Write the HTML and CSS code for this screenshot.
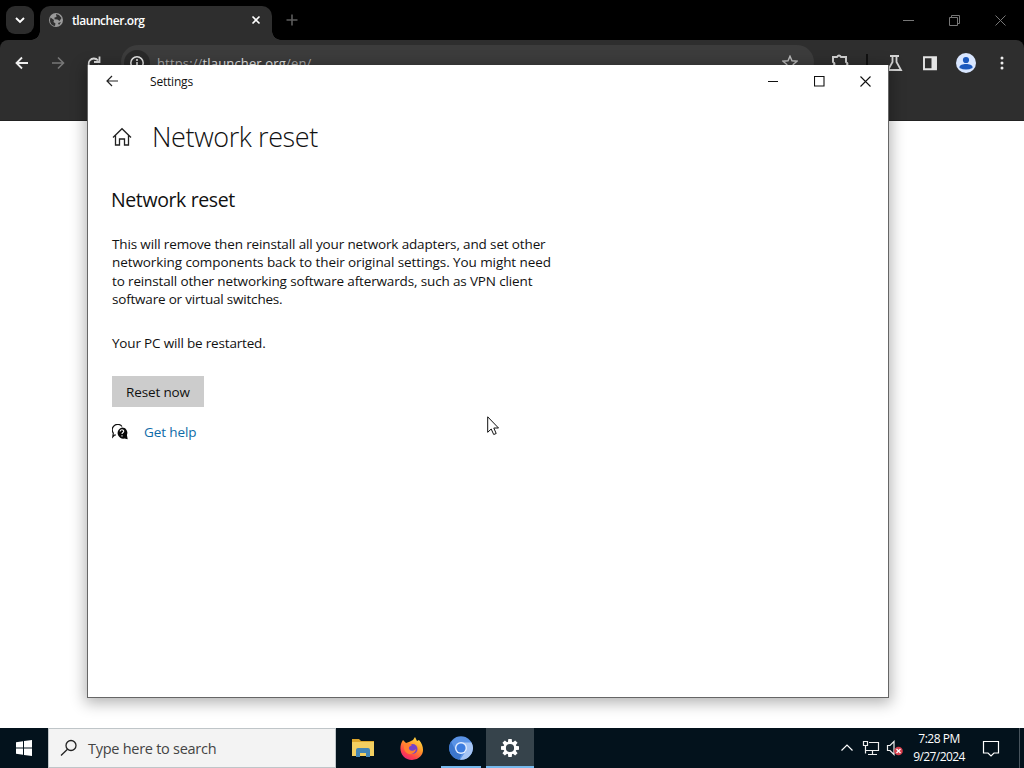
FILE: index.html
```html
<!DOCTYPE html>
<html lang="en">
<head>
<meta charset="utf-8">
<title>Settings</title>
<link rel="stylesheet" href="styles.css">
</head>
<body>
<div class="desktop">
  <div class="browser">
    <div class="tabstrip">
      <div class="tab-search"><svg width="28" height="28"><path d="M10 12l4 4 4-4" fill="none" stroke="#fff" stroke-width="1.9"/></svg></div>
      <div class="tab">
        <svg class="globe" width="16" height="16" viewBox="0 0 16 16"><circle cx="8" cy="8" r="7" fill="#9a9a9a"/><path d="M2.5 5.500L6 8l-.5 2 2 1.500-.5 2.500C3.500 13.500 2 11 2 8zM8 2l3 1 2.500 3-2 3-2-1.500-3-.3V5.500l2-.5zM10 11l3-1-2 3z" fill="#303030"/></svg>
        <span class="tab-title">tlauncher.org</span>
        <svg width="10" height="10"><path d="M1.500 1.500l7 7M8.500 1.500l-7 7" stroke="#fff" stroke-width="1.600"/></svg>
      </div>
      <svg class="new-tab" width="12" height="12"><path d="M6 .5v11M.5 6h11" stroke="#5c5c5c" stroke-width="1.6"/></svg>
      <div class="browser-controls">
        <svg width="11" height="11"><path d="M0 5.500h11" stroke="#777"/></svg>
        <svg width="11" height="11"><path d="M.5 2.500h8v8h-8zM2.500 2.500v-2h8v8h-2" fill="none" stroke="#777"/></svg>
        <svg width="11" height="11"><path d="M.5.5l10 10M10.500.5l-10 10" stroke="#777"/></svg>
      </div>
    </div>
    <div class="toolbar">
      <svg class="nav" width="108" height="24"><path d="M28 12H17.500M22 6.500L16.500 12l5.500 5.500" fill="none" stroke="#eee" stroke-width="1.8"/><path d="M52 12h11M58 6.500l5.500 5.500-5.500 5.500" fill="none" stroke="#777" stroke-width="1.6"/><path d="M98 9.500A5.300 5.300 0 1 0 99 14M99.500 5.500V11H94" fill="none" stroke="#ddd" stroke-width="1.8"/></svg>
      <div class="address">
        <div class="info"><svg width="16" height="16"><circle cx="8" cy="8" r="6.200" fill="none" stroke="#e2e2e2" stroke-width="1.5"/><path d="M8 4v2M8 7v5" stroke="#e2e2e2" stroke-width="1.5"/></svg></div>
        <span class="url">https://<b>tlauncher.org</b>/en/</span>
        <svg width="16" height="16"><path d="M8 1.200l2 4.600 5 .4-3.800 3.300 1.200 5L8 12l-4.400 2.500 1.200-5L1 6.200l5-.4z" fill="none" stroke="#bbb" stroke-width="1.400"/></svg>
      </div>
      <svg class="tools" width="210" height="24"><path d="M20 6h4q2-3 4 0h5v5q3 2 0 4v5H20v-5q3-2 0-4z" fill="none" stroke="#d0d0d0" stroke-width="2"/><path d="M54 3v16" stroke="#111" stroke-width="2"/><path d="M77 5h9M79.500 5v6L75 19h13l-4.500-8V5" fill="none" stroke="#d4d4d4" stroke-width="1.800"/><path d="M111 6.200h12v12h-12z" fill="none" stroke="#e5e5e5" stroke-width="1.900"/><path d="M118.500 6h5v12h-5z" fill="#e5e5e5"/><circle cx="153" cy="12" r="10" fill="#d9e6ff"/><circle cx="153" cy="9" r="3.100" fill="#1b58bd"/><path d="M146.500 17v-1c0-4 13-4 13 0v1q-6.500 3-13 0z" fill="#1b58bd"/><circle cx="189" cy="7" r="1.500" fill="#eee"/><circle cx="189" cy="12" r="1.500" fill="#eee"/><circle cx="189" cy="17" r="1.500" fill="#eee"/></svg>
    </div>
  </div>

  <main class="window">
    <div class="titlebar">
      <svg width="12" height="12"><path d="M12 6H1M6 1L1 6l5 5" fill="none" stroke="#222" stroke-width="1.200"/></svg>
      <span class="window-title">Settings</span>
      <div class="window-controls">
        <svg width="11" height="11"><path d="M0 5.500h10" stroke="#111"/></svg>
        <svg width="11" height="11"><path d="M.5.5h9.500v9.500H.5z" fill="none" stroke="#111" stroke-width="1.100"/></svg>
        <svg width="11" height="11"><path d="M.5.5l10 10M10.500.5l-10 10" stroke="#111" stroke-width="1.100"/></svg>
      </div>
    </div>
    <div class="page">
      <header class="page-head">
        <svg width="20" height="20"><path d="M1 10.500l9-8.800 9 8.800M3.500 8.500V18h4v-6h5v6h4V8.500" fill="none" stroke="#222" stroke-width="1.300"/></svg>
        <h1>Network reset</h1>
      </header>
      <h2>Network reset</h2>
      <p class="description"><span class="l1">This will remove then reinstall all your network adapters, and set other</span><br><span class="l2">networking components back to their original settings. You might need</span><br><span class="l3">to reinstall other networking software afterwards, such as VPN client</span><br><span class="l4">software or virtual switches.</span></p>
      <p class="restart">Your PC will be restarted.</p>
      <button class="reset">Reset now</button>
      <div class="help">
        <svg width="16" height="16"><path d="M4 11H2.500L.8 12.800 1.300 9A5.200 5.200 0 0 1 10 2.500" fill="none" stroke="#111" stroke-width="1.200"/><path d="M10 3.500a5.300 5.300 0 0 1 4.900 7.500l.8 4.300-3.200-.8A5.500 5.500 0 1 1 10 3.500z" fill="#080808"/><path d="M8.200 7.500c0-2.400 3.700-2.100 3.500 0-.1 1.100-1.700 1.100-1.700 2.500M10 11.200v1.200" fill="none" stroke="#fff" stroke-width="1.100"/></svg>
        <a class="help-link">Get help</a>
      </div>
    </div>
  </main>

  <footer class="taskbar">
    <div class="start"><svg width="16" height="16"><path d="M0 2.200l7-1V7.500H0zM8 1l8-1v7.500H8zM0 8.500h7v6.300l-7-1zM8 8.500h8V16l-8-1z" fill="#fff"/></svg></div>
    <div class="search"><svg width="18" height="18"><circle cx="11" cy="6.500" r="5" fill="none" stroke="#222" stroke-width="1.300"/><path d="M7.500 10.200L1 16.500" stroke="#222" stroke-width="1.300"/></svg><span>Type here to search</span></div>
    <div class="apps">
      <div class="app"><svg width="24" height="24"><path d="M1 3h7l2 2h13v15H1z" fill="#dca62c"/><path d="M1 6h22v14H1z" fill="#f3cf61"/><path d="M5 21v-7q0-2 2-2h10q2 0 2 2v7h-4v-4H9v4z" fill="#4385b5"/></svg></div>
      <div class="app"><svg width="24" height="24"><defs><linearGradient id="fox" x1=".8" y1="0" x2=".2" y2="1"><stop offset="0" stop-color="#ffe047"/><stop offset=".4" stop-color="#ff9828"/><stop offset=".75" stop-color="#ff414c"/><stop offset="1" stop-color="#e5227b"/></linearGradient></defs><path d="M3 4l3 3 3-1 4-2 2-3 2 4 2-1c7 8 5 19-7 20C2 24-3 13 3 4z" fill="url(#fox)"/><circle cx="12.500" cy="13" r="5" fill="#7542c8"/><path d="M4 9c3-3 6-2 8 0l-3 2c-1 4 4 5 7 2-1 7-11 7-12-1z" fill="#ff8030"/></svg></div>
      <div class="app running"><svg width="24" height="24"><circle cx="12" cy="12" r="11.800" fill="#5a93e6"/><path d="M12 6.500h10.500A11.800 11.800 0 0 1 11 23.800l6-8.800z" fill="#a6c5f5"/><path d="M2 5.500L7 15q2 3 6 2.500L10 23.700A11.800 11.800 0 0 1 2 5.500z" fill="#3c76cc"/><circle cx="12" cy="12" r="6" fill="#e1ecff"/><circle cx="12" cy="12" r="4.600" fill="#3d7de0"/></svg></div>
      <div class="app running active"><svg width="20" height="20" viewBox="-10 -10 20 20"><g fill="#fff"><path id="tooth" d="M-1.700-9h3.400l.5 4h-4.400z"/><use href="#tooth" transform="rotate(45)"/><use href="#tooth" transform="rotate(90)"/><use href="#tooth" transform="rotate(135)"/><use href="#tooth" transform="rotate(180)"/><use href="#tooth" transform="rotate(225)"/><use href="#tooth" transform="rotate(270)"/><use href="#tooth" transform="rotate(315)"/></g><circle r="5.300" fill="none" stroke="#fff" stroke-width="2.400"/></svg></div>
    </div>
    <div class="tray">
      <svg width="66" height="20"><path d="M1.500 12.500L7 7l5.500 5.500" fill="none" stroke="#fff" stroke-width="1.200"/><path d="M29 4.500h9.500v8H26M32.500 13v3M28 16.500h9M23.500 3.500h4v4h-4zM25.500 7.500v8" fill="none" stroke="#eee" stroke-width="1.200"/><path d="M47.500 7.500H50l4-4v13l-4-4h-2.500z" fill="none" stroke="#eee" stroke-width="1.200"/><circle cx="58.500" cy="13" r="4.300" fill="#d83e4c"/><path d="M56.500 11l4 4M60.500 11l-4 4" stroke="#fff" stroke-width="1.300"/></svg>
      <div class="clock"><span class="time">7:28 PM</span><span class="date">9/27/2024</span></div>
      <svg class="notice" width="18" height="18"><path d="M1.500 2.500h15V14H12l-3 3-3-3H1.500z" fill="none" stroke="#fff" stroke-width="1.200"/></svg>
      <div class="show-desktop"></div>
    </div>
  </footer>
  <svg class="cursor" width="13" height="20"><path d="M.7.8v15.500l3.500-3.300 2.500 5.500 2.500-1-2.400-5.500h4.700z" fill="#fff" stroke="#111"/></svg>
</div>
</body>
</html>
```
FILE: styles.css
```css
* { box-sizing: border-box; }
body { margin: 0; font-family: "Open Sans", "Noto Sans", sans-serif; color: #111; }
svg { display: block; flex: none; }
h1, h2, p { margin: 0; font-weight: 400; white-space: nowrap; }
.desktop { position: relative; width: 1024px; height: 768px; overflow: hidden; background: #fff; display: flex; flex-direction: column; }
.browser { height: 728px; }
.tabstrip { height: 40px; background: #000; display: flex; align-items: center; padding-left: 6px; }
.tab-search { width: 28px; height: 28px; border-radius: 9px; background: #2c2c2c; }
.tab { position: relative; width: 232px; height: 34px; margin: 6px 0 0 6px; padding: 0 11px 6px 8px; border-radius: 10px 10px 0 0; background: #2e2e2e; display: flex; align-items: center; }
.tab::before, .tab::after { content: ""; position: absolute; bottom: 0; width: 9px; height: 9px; }
.tab::before { left: -9px; background: radial-gradient(circle at 0 0, transparent 8.5px, #2e2e2e 9px); }
.tab::after { right: -9px; background: radial-gradient(circle at 100% 0, transparent 8.5px, #2e2e2e 9px); }
.tab-title { margin: 0 auto 0 8px; padding-top: 1px; color: #fff; font: 600 12px/18px "Open Sans", sans-serif; letter-spacing: -.45px; }
.new-tab { margin-left: 14px; }
.browser-controls { display: flex; gap: 35px; margin: 0 18px 0 auto; }
.toolbar { height: 81px; background: #2e2e2e; border-bottom: 1px solid #222; display: flex; align-items: flex-start; padding-top: 5px; border-radius: 8px 8px 0 0; box-shadow: 0 -8px #000; }
.nav, .tools { margin-top: 6px; }
.nav { margin-right: 13px; }
.address { width: 693px; height: 34px; border-radius: 17px; background: #3c3c3c; display: flex; align-items: center; padding: 2px 16px 0 3px; }
.info { width: 26px; height: 26px; border-radius: 13px; background: #292929; display: grid; place-items: center; }
.url { margin: 0 auto 0 7px; font-size: 13px; color: #a9a9a9; letter-spacing: .15px; }
.url b { color: #e5e5e5; font-weight: 400; }
.tools { margin-left: -1px; }

.window { position: absolute; left: 87px; top: 65px; width: 802px; height: 633px; background: #fff; border: 1px solid #666; border-top: 0; box-shadow: 0 3px 14px 2px rgba(0,0,0,.3); }
.titlebar { height: 32px; display: flex; align-items: center; padding: 0 17px 0 18px; }
.window-title { margin-left: 32px; font-size: 12px; letter-spacing: -.2px; padding-top: 1px; }
.window-controls { display: flex; gap: 35px; margin-left: auto; }
.page { padding: 19px 24px; }
.page-head { display: flex; align-items: center; height: 41px; gap: 21px; }
h1 { font-size: 27px; line-height: 40px; font-weight: 350; letter-spacing: -.4px; margin-left: -1px; }
h2 { margin: 28px 0 0 -1px; font-size: 19.500px; line-height: 30px; letter-spacing: -.38px; }
.description { margin-top: 20px; font-size: 13.500px; line-height: 18.400px; }
.l1 { letter-spacing: -.14px; }
.l2 { letter-spacing: -.085px; }
.l3 { letter-spacing: -.145px; }
.l4 { letter-spacing: -.2px; }
.restart { margin-top: 25px; font-size: 13.500px; line-height: 19px; letter-spacing: -.18px; }
.reset { display: block; width: 92px; height: 31px; margin-top: 23px; padding: 1px 0 0; border: 0; background: #ccc; color: #111; font: 13.500px "Open Sans", sans-serif; letter-spacing: -.15px; }
.help { display: flex; align-items: center; gap: 16px; margin-top: 15px; height: 20px; }
.help-link { color: #0e6ba8; font-size: 13.500px; line-height: 20px; letter-spacing: -.1px; }

.taskbar { height: 40px; background: #03121c; display: flex; }
.start { width: 48px; display: grid; place-items: center; }
.search { width: 288px; border: 1px solid #bfc5c8; background: #f3f3f3; color: #444; display: flex; align-items: center; padding-left: 11px; gap: 10px; font-size: 14.500px; letter-spacing: -.27px; }
.apps { display: flex; margin-left: 3px; }
.app { position: relative; width: 48px; height: 40px; margin-right: 1px; display: grid; place-items: center; }
.running::after { content: ""; position: absolute; left: 4px; right: 4px; bottom: 0; height: 2px; background: #76b9ed; }
.active { margin-left: 0; background: #36434b; }
.active::after { left: 0; right: 0; }
.tray { margin-left: auto; display: flex; align-items: center; }
.clock { width: 66px; color: #fff; font-size: 12px; line-height: 18px; letter-spacing: -.5px; display: flex; flex-direction: column; align-items: center; }
.date { letter-spacing: -.6px; }
.notice { margin-left: 10px; }
.show-desktop { width: 5px; height: 40px; margin-left: 19px; border-left: 1px solid #48545d; }
.cursor { position: absolute; left: 487px; top: 416px; }
```
